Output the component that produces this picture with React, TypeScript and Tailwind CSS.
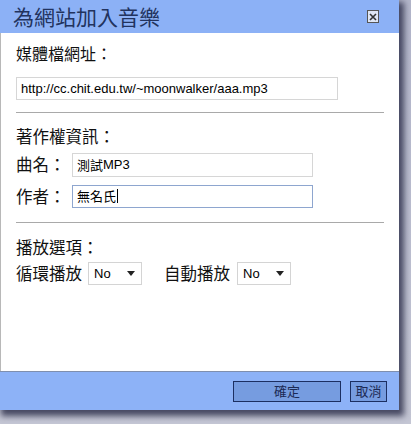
import React from "react";

const cjk = { fontFamily: '"Noto Sans CJK TC", "Noto Sans CJK SC", sans-serif' };
const arial = { fontFamily: '"Liberation Sans", Arial, sans-serif' };

function Select() {
  return (
    <div
      className="w-[54px] h-[23px] border border-[#d4d4d4] bg-white flex items-center justify-between pl-[5px] pr-[6px] text-[13px] text-black"
      style={arial}
    >
      <span>No</span>
      <svg width="8" height="5" viewBox="0 0 8 5">
        <path d="M0 0 L8 0 L4 5 Z" fill="#222" />
      </svg>
    </div>
  );
}

export default function App() {
  return (
    <div className="w-[411px] h-[424px] bg-[linear-gradient(to_bottom,#b3b6ca,#c4c6d4)] overflow-hidden relative">
      <div className="w-[399px] h-[410px] flex flex-col shadow-[3px_4px_6px_2px_rgba(40,42,70,0.8)] bg-white">
        <div className="h-[33px] bg-[#8cb1f6] flex items-center justify-between pl-[13px] pr-[20px] shrink-0">
          <span className="text-[21px] text-[#22335e] leading-none" style={cjk}>為網站加入音樂</span>
          <div className="w-[12px] h-[13px] border border-[#555] bg-[#dfe6f5] flex items-center justify-center">
            <svg width="8" height="8" viewBox="0 0 8 8">
              <path d="M1 1 L7 7 M7 1 L1 7" stroke="#333" strokeWidth="1.6" />
            </svg>
          </div>
        </div>
        <div className="flex-1 bg-white border-l border-[#b8b8b8] pl-[15px] pr-[15px] flex flex-col text-[#111]" style={cjk}>
          <div className="text-[16px] leading-none mt-[12px]">媒體檔網址：</div>
          <div
            className="mt-[16px] w-[322px] h-[23px] border border-[#d6d6d6] flex items-center pl-[4px] text-[13px] text-black"
            style={arial}
          >
            http://cc.chit.edu.tw/~moonwalker/aaa.mp3
          </div>
          <div className="mt-[12px] h-px bg-[#a9a9a9] w-[368px]" />
          <div className="text-[16.5px] leading-none mt-[15px]">著作權資訊：</div>
          <div className="mt-[8px] flex items-center">
            <span className="text-[16.5px] w-[56px] leading-none">曲名：</span>
            <div className="w-[241px] h-[24px] border border-[#d6d6d6] flex items-center pl-[4px] text-[13px] text-black" style={cjk}>
              測試<span style={arial}>MP3</span>
            </div>
          </div>
          <div className="mt-[8px] flex items-center">
            <span className="text-[16.5px] w-[56px] leading-none">作者：</span>
            <div className="w-[241px] h-[23px] border border-[#8ea6cf] flex items-center pl-[4px] text-[13px] text-black" style={cjk}>
              無名氏<span className="w-px h-[14px] bg-black ml-px" />
            </div>
          </div>
          <div className="mt-[14px] h-px bg-[#a9a9a9] w-[368px]" />
          <div className="text-[16.5px] leading-none mt-[16px]">播放選項：</div>
          <div className="mt-[7px] flex items-center">
            <span className="text-[16.5px] leading-none w-[72px]">循環播放</span>
            <Select />
            <span className="text-[16.5px] leading-none ml-[22px] w-[73px]">自動播放</span>
            <Select />
          </div>
        </div>
        <div className="h-[39px] bg-[#8db2f7] border-t border-[#7f8fae] flex items-center justify-end pr-[12px] gap-[9px] shrink-0">
          <div className="w-[108px] h-[21px] bg-[#769ce0] border border-[#1c2f62] flex items-center justify-center text-[13px] text-[#1c2a55]" style={cjk}>
            確定
          </div>
          <div className="w-[37px] h-[21px] bg-[#769ce0] border border-[#1c2f62] flex items-center justify-center text-[13px] text-[#1c2a55]" style={cjk}>
            取消
          </div>
        </div>
      </div>
    </div>
  );
}
